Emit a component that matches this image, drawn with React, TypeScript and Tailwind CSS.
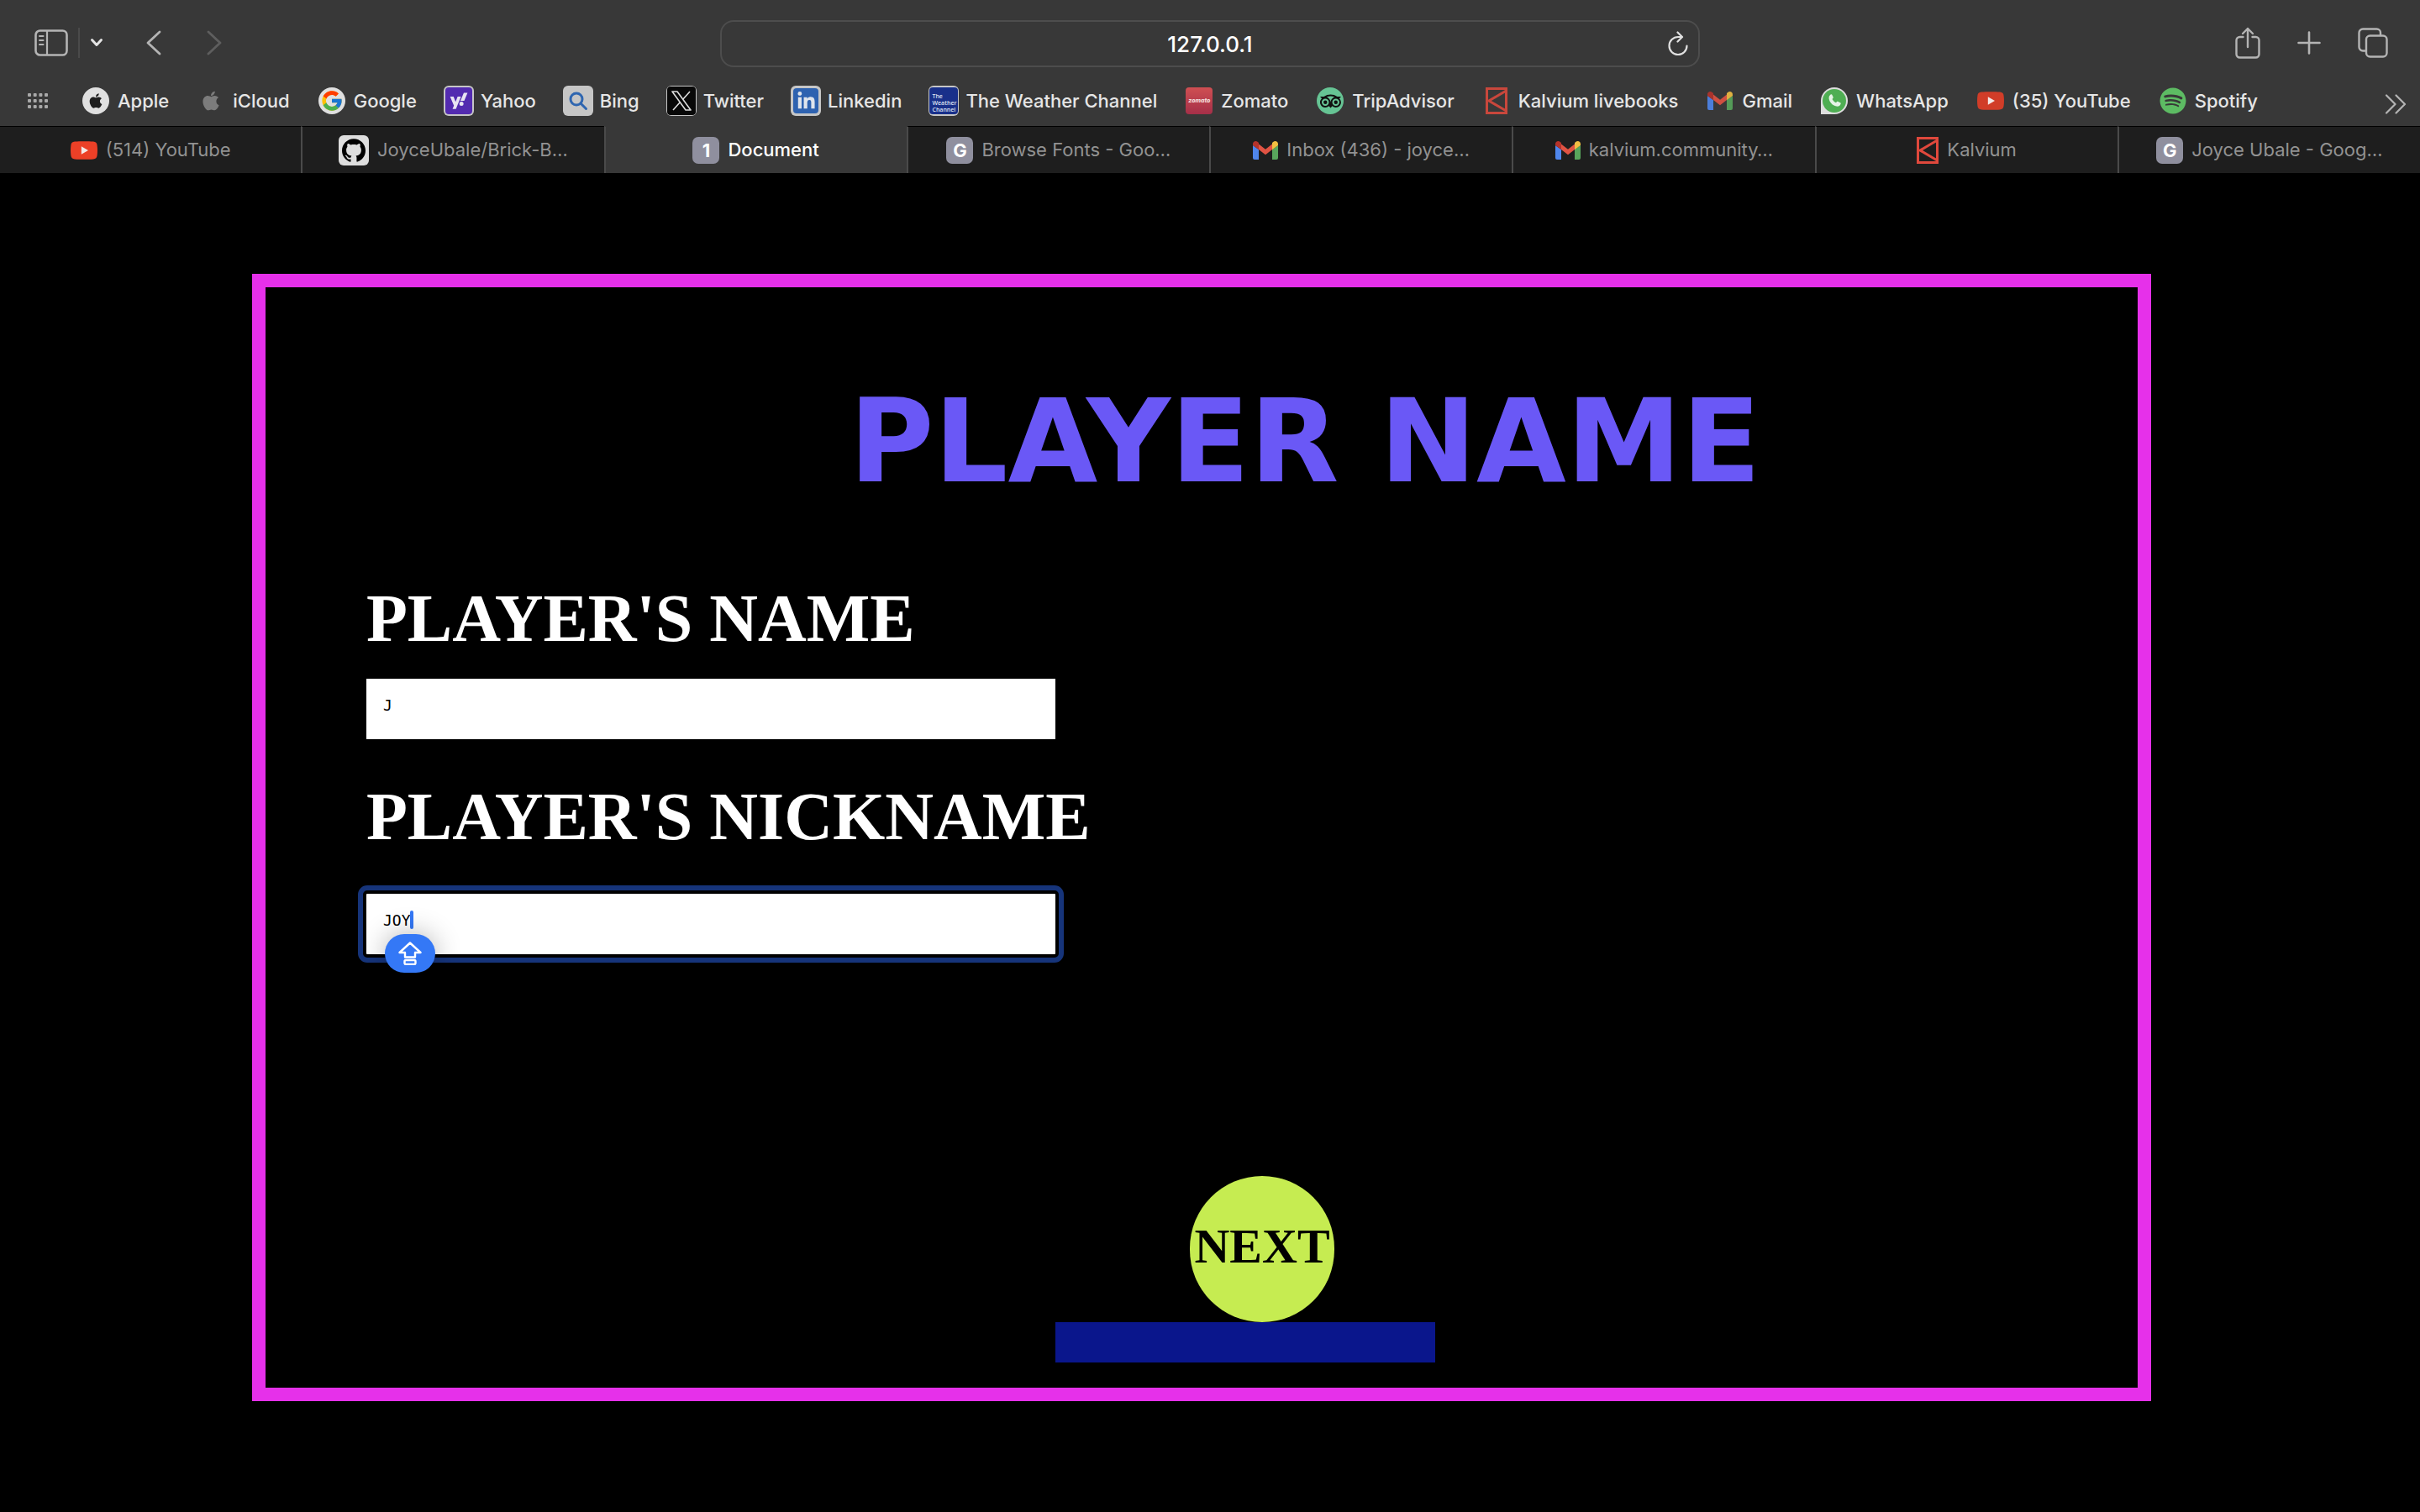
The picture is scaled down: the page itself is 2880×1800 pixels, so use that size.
import type { ReactNode } from "react";
import { FaApple, FaLinkedinIn, FaSpotify, FaYahoo } from "react-icons/fa6";
import { FcGoogle } from "react-icons/fc";
import { SiGithub, SiTripadvisor } from "react-icons/si";

/* ---------- toolbar glyphs ---------- */

function SidebarIcon() {
  return (
    <svg viewBox="0 0 40 32" className="h-8 w-10" fill="none" stroke="currentColor" aria-hidden="true">
      <rect x="1.5" y="1.5" width="37" height="29" rx="5" strokeWidth="2.6" />
      <path d="M15 1.500V30.500" strokeWidth="2.200" />
      <path d="M6 8h4.500M6 13h4.500M6 18h4.500" strokeWidth="2" strokeLinecap="round" />
    </svg>
  );
}

function ChevronDownIcon() {
  return (
    <svg viewBox="0 0 16 12" className="h-3 w-4" fill="none" stroke="currentColor" strokeWidth="3" strokeLinecap="round" strokeLinejoin="round" aria-hidden="true">
      <path d="M2.500 2.500 8 8.500l5.500-6" />
    </svg>
  );
}

function BackIcon() {
  return (
    <svg viewBox="0 0 20 30" className="h-[30px] w-5" fill="none" stroke="currentColor" strokeWidth="2.800" strokeLinecap="round" strokeLinejoin="round" aria-hidden="true">
      <path d="M17 2 3 15l14 13" />
    </svg>
  );
}

function ForwardIcon() {
  return (
    <svg viewBox="0 0 20 30" className="h-[30px] w-5" fill="none" stroke="currentColor" strokeWidth="2.800" strokeLinecap="round" strokeLinejoin="round" aria-hidden="true">
      <path d="m3 2 14 13L3 28" />
    </svg>
  );
}

function ReloadIcon() {
  return (
    <svg viewBox="0 0 24 30" className="h-[30px] w-6" fill="none" stroke="currentColor" strokeWidth="2.200" strokeLinecap="round" strokeLinejoin="round" aria-hidden="true">
      <path d="M22.500 17.500A10.500 10.500 0 1 1 12 7h4" />
      <path d="M11.500 1.500 17 7l-5.500 5.500" />
    </svg>
  );
}

function ShareIcon() {
  return (
    <svg viewBox="0 0 30 38" className="h-[38px] w-[30px]" fill="none" stroke="currentColor" strokeWidth="2.400" strokeLinecap="round" strokeLinejoin="round" aria-hidden="true">
      <path d="M9.500 12H5.500A4 4 0 0 0 1.500 16v16.500a4 4 0 0 0 4 4h19a4 4 0 0 0 4-4V16a4 4 0 0 0-4-4h-4" />
      <path d="M15 24V2M9 8l6-6 6 6" />
    </svg>
  );
}

function PlusIcon() {
  return (
    <svg viewBox="0 0 28 28" className="size-7" fill="none" stroke="currentColor" strokeWidth="2.600" strokeLinecap="round" aria-hidden="true">
      <path d="M14 1.500v25M1.500 14h25" />
    </svg>
  );
}

function TabsIcon() {
  return (
    <svg viewBox="0 0 36 36" className="size-9" fill="none" stroke="currentColor" strokeWidth="2.400" strokeLinejoin="round" aria-hidden="true">
      <rect x="10" y="9.500" width="24.500" height="25" rx="4.500" />
      <path d="M10 27.500H6A4.500 4.500 0 0 1 1.500 23V6A4.500 4.500 0 0 1 6 1.500h16.500A4.500 4.500 0 0 1 27 6v3.500" />
    </svg>
  );
}

function MoreIcon() {
  return (
    <svg viewBox="0 0 26 24" className="h-6 w-[26px]" fill="none" stroke="currentColor" strokeWidth="2.200" strokeLinecap="round" strokeLinejoin="round" aria-hidden="true">
      <path d="m2 1.500 10.500 10.500L2 22.500M13.500 1.500 24 12 13.500 22.500" />
    </svg>
  );
}

function GridDotsIcon() {
  return (
    <svg viewBox="0 0 24 18" className="h-[18px] w-6" fill="currentColor" aria-hidden="true">
      {[0, 7, 14].map((y) => [0, 6.7, 13.4, 20].map((x) => <rect key={`${x}-${y}`} x={x} y={y} width="4" height="4" rx="1" />))}
    </svg>
  );
}

/* ---------- site icons ---------- */

function GmailIcon({ className }: { className: string }) {
  return (
    <svg viewBox="0 0 30 22" className={className} aria-hidden="true">
      <path d="M0 5v15a2 2 0 0 0 2 2h5V10z" fill="#4f86ec" />
      <path d="M30 5v15a2 2 0 0 1-2 2h-5V10z" fill="#58a55c" />
      <path d="M7 3.500 15 9.800l8-6.300V10l-8 6.200L7 10z" fill="#e05343" />
      <path d="M0 3.500C0 .3 3.400-1 5.800.9L7 2v8.200L0 5z" fill="#b5332b" />
      <path d="M30 3.500C30 .3 26.600-1 24.200.9L23 2v8.200l7-5.200z" fill="#f2bf42" />
    </svg>
  );
}

function XIcon() {
  return (
    <svg viewBox="0 0 26 26" className="size-[26px]" fill="none" stroke="currentColor" strokeWidth="1.600" strokeLinejoin="round" aria-hidden="true">
      <path d="M2 2h6l16 22h-6z" />
      <path d="M23 2 14.500 11.500M11.500 14.500 3 24" />
    </svg>
  );
}

function YouTubeIcon({ className }: { className: string }) {
  return (
    <svg viewBox="0 0 32 22" className={className} aria-hidden="true">
      <path d="M5 .6C11 0 21 0 27 .6c3 .3 4.300 1.500 4.600 4.400.5 4 .5 8 0 12-.3 2.900-1.600 4.100-4.600 4.400-6 .6-16 .6-22 0-3-.3-4.300-1.500-4.600-4.400-.5-4-.5-8 0-12C.7 2.100 2 .9 5 .6z" fill="currentColor" />
      <path d="m12.800 6.300 8.200 4.700-8.200 4.700z" fill="#f4e9e7" />
    </svg>
  );
}

function KalviumIcon({ className }: { className: string }) {
  return (
    <svg viewBox="0 0 26 32" className={className} fill="none" stroke="currentColor" aria-hidden="true">
      <rect x="1.500" y="1.500" width="23" height="29" strokeWidth="3" />
      <path d="M24.500 4 4 16l20.500 12" strokeWidth="3" />
    </svg>
  );
}

function WhatsAppIcon() {
  return (
    <span className="flex size-8 items-center justify-center rounded-full rounded-bl-sm bg-[#dedede]">
      <span className="flex size-7 items-center justify-center rounded-full bg-[#4fae53] text-[#e6f3e6]">
        <svg viewBox="0 0 20 20" className="size-5" fill="currentColor" aria-hidden="true">
          <path d="M5.600 2.600c.6-.5 1.400-.4 1.700.2l1.300 2.700c.3.600.1 1-.3 1.500l-.8 1c1 2 2.400 3.300 4.500 4.300l1.100-1.200c.4-.4.8-.5 1.400-.2l2.600 1.300c.6.300.8.800.5 1.500-.8 2.300-2.900 3.400-5.200 2.800C7.700 15.300 4.500 12 3.600 7.400 3.300 5.500 4.200 3.600 5.600 2.600z" />
        </svg>
      </span>
    </span>
  );
}

function LetterBadge({ children }: { children: string }) {
  return (
    <span className="flex size-8 items-center justify-center rounded-[7px] bg-[#8f8f9e] text-[22px] leading-8 font-bold text-white">
      {children}
    </span>
  );
}

const tile = "flex size-9 items-center justify-center overflow-hidden rounded-md bg-[#c6c6c6]";

type Site = { label: string; icon: ReactNode };

const bookmarks: Site[] = [
  {
    label: "Apple",
    icon: (
      <span className="flex size-8 items-center justify-center rounded-full bg-[#e0e0e0] text-[#1e1e1e]">
        <FaApple className="size-5" />
      </span>
    ),
  },
  { label: "iCloud", icon: <FaApple className="size-[26px] text-[#7c7c7c]" /> },
  {
    label: "Google",
    icon: (
      <span className="flex size-8 items-center justify-center rounded-full bg-[#e0e0e0]">
        <FcGoogle className="size-[28px]" />
      </span>
    ),
  },
  {
    label: "Yahoo",
    icon: (
      <span className={tile}>
        <span className="flex size-8 items-center justify-center rounded-sm bg-[#532bb0] text-[#e8e4f2]">
          <FaYahoo className="size-[22px]" />
        </span>
      </span>
    ),
  },
  {
    label: "Bing",
    icon: (
      <span className={tile}>
        <svg viewBox="0 0 24 24" className="size-6" fill="none" stroke="#2f66b0" strokeWidth="3" strokeLinecap="round" aria-hidden="true">
          <circle cx="10" cy="10" r="7" />
          <path d="m15.500 15.500 6 6" />
        </svg>
      </span>
    ),
  },
  {
    label: "Twitter",
    icon: (
      <span className={tile}>
        <span className="flex size-[34px] items-center justify-center rounded-sm bg-[#080808] text-[#dcdcdc]">
          <XIcon />
        </span>
      </span>
    ),
  },
  {
    label: "Linkedin",
    icon: (
      <span className={tile}>
        <span className="flex size-[30px] items-center justify-center rounded-sm bg-[#2e62b0] text-[#dfe4ec]">
          <FaLinkedinIn className="size-[23px]" />
        </span>
      </span>
    ),
  },
  {
    label: "The Weather Channel",
    icon: (
      <span className={tile}>
        <span className="flex h-8 w-[34px] flex-col justify-end rounded-sm bg-[#19308a] pb-px pl-[3px] text-left font-['Open_Sans',sans-serif] text-[7px] leading-[8px] font-semibold text-[#dfe3f2]">
          <span>The</span>
          <span>Weather</span>
          <span>Channel</span>
        </span>
      </span>
    ),
  },
  {
    label: "Zomato",
    icon: (
      <span className="flex size-8 items-center justify-center overflow-hidden rounded-sm bg-linear-to-b from-[#cf4f52] to-[#a52f48] text-[7px] font-extrabold text-[#f2dada] italic">
        zomato
      </span>
    ),
  },
  {
    label: "TripAdvisor",
    icon: (
      <span className="flex size-8 items-center justify-center rounded-full bg-[#66c494] text-[#101010]">
        <SiTripadvisor className="size-[25px]" />
      </span>
    ),
  },
  { label: "Kalvium livebooks", icon: <KalviumIcon className="h-8 w-[26px] text-[#c9473c]" /> },
  { label: "Gmail", icon: <GmailIcon className="h-[22px] w-[30px] opacity-90" /> },
  { label: "WhatsApp", icon: <WhatsAppIcon /> },
  { label: "(35) YouTube", icon: <YouTubeIcon className="h-[22px] w-8 text-[#d13d28]" /> },
  { label: "Spotify", icon: <FaSpotify className="size-8 text-[#5dbb63]" /> },
];

const tabs: Site[] = [
  { label: "(514) YouTube", icon: <YouTubeIcon className="h-[22px] w-8 text-[#ec4027]" /> },
  {
    label: "JoyceUbale/Brick-B…",
    icon: (
      <span className="flex size-9 items-center justify-center rounded-md bg-[#dedede] text-black">
        <SiGithub className="size-7" />
      </span>
    ),
  },
  { label: "Document", icon: <LetterBadge>1</LetterBadge> },
  { label: "Browse Fonts - Goo…", icon: <LetterBadge>G</LetterBadge> },
  { label: "Inbox (436) - joyce…", icon: <GmailIcon className="h-[22px] w-[30px]" /> },
  { label: "kalvium.community…", icon: <GmailIcon className="h-[22px] w-[30px]" /> },
  { label: "Kalvium", icon: <KalviumIcon className="h-8 w-[26px] text-[#e0483c]" /> },
  { label: "Joyce Ubale - Goog…", icon: <LetterBadge>G</LetterBadge> },
];

/* ---------- browser chrome ---------- */

function Toolbar() {
  return (
    <div className="grid h-[92px] grid-cols-[1fr_minmax(0,1166px)_1fr] items-center pt-3 text-[#b4b4b4]">
      <div className="flex items-center pb-0.5 pl-[41px]">
        <button type="button" aria-label="Show sidebar">
          <SidebarIcon />
        </button>
        <span className="ml-3 h-9 w-[2px] bg-[#4a4a4a]" />
        <button type="button" aria-label="Tab groups" className="ml-3 text-[#e4e4e4]">
          <ChevronDownIcon />
        </button>
        <button type="button" aria-label="Back" className="ml-[50px]">
          <BackIcon />
        </button>
        <button type="button" aria-label="Forward" className="ml-[52px] text-[#5e5e5e]">
          <ForwardIcon />
        </button>
      </div>
      <div className="flex h-14 items-center rounded-2xl border-2 border-[#4d4d4d] pr-3 pl-9">
        <input
          type="text"
          aria-label="Address"
          defaultValue="127.0.0.1"
          className="min-w-0 flex-1 bg-transparent text-center text-[26px] font-medium text-white outline-none"
        />
        <button type="button" aria-label="Reload" className="text-[#e0e0e0]">
          <ReloadIcon />
        </button>
      </div>
      <div className="flex items-center justify-end gap-11 pr-[38px] pb-0.5">
        <button type="button" aria-label="Share">
          <ShareIcon />
        </button>
        <button type="button" aria-label="New tab">
          <PlusIcon />
        </button>
        <button type="button" aria-label="Show all tabs">
          <TabsIcon />
        </button>
      </div>
    </div>
  );
}

function BookmarksBar() {
  return (
    <nav aria-label="Favorites" className="flex h-[58px] items-center pr-4 pb-0.5 pl-[33px]">
      <button type="button" aria-label="Favorites overview" className="mr-[39px] text-[#a8a8a8]">
        <GridDotsIcon />
      </button>
      <div className="flex flex-1 items-center justify-between">
        {bookmarks.map((b) => (
          <a key={b.label} href="#" className="flex items-center gap-2 text-[22px] font-medium whitespace-nowrap text-[#e6e6e6]">
            <span className="flex w-9 justify-center">{b.icon}</span>
            {b.label}
          </a>
        ))}
      </div>
      <button type="button" aria-label="More favorites" className="mt-2 ml-[151px] text-[#b4b4b4]">
        <MoreIcon />
      </button>
    </nav>
  );
}

function TabStrip() {
  return (
    <div role="tablist" className="flex h-14">
      {tabs.map((t, i) => {
        const active = t.label === "Document";
        const tone = active
          ? "bg-[#383838] text-white font-medium border-t-[#383838]"
          : "bg-[#1e1e1e] text-[#929292] border-t-black";
        const edge = i === 0 ? "" : "border-l-2 border-l-[#4a4a4a]";
        return (
          <button
            key={t.label}
            type="button"
            role="tab"
            aria-selected={active}
            className={`flex min-w-0 flex-1 items-center justify-center gap-[10px] border-t text-[22px] whitespace-nowrap ${tone} ${edge}`}
          >
            {t.icon}
            {t.label}
          </button>
        );
      })}
    </div>
  );
}

/* ---------- page ---------- */

function CapsLockBadge() {
  return (
    <span className="absolute top-12 left-[22px] flex h-[46px] w-[60px] items-center justify-center rounded-full bg-[#3478f6] shadow-[0_0_32px_rgba(0,0,0,0.3)]">
      <svg viewBox="0 0 28 28" className="size-7" fill="none" stroke="white" strokeWidth="2.400" strokeLinejoin="round" aria-hidden="true">
        <path d="M14 1.500 26.500 13H20v5.500H8V13H1.500z" />
        <rect x="7.500" y="22" width="13" height="5" rx="1.500" />
      </svg>
    </span>
  );
}

const field = "block h-[72px] w-full bg-white px-5 pb-[10px] font-['DejaVu_Sans_Mono',monospace] text-[18px] text-black";
const label = "block font-['Liberation_Serif',serif] text-[80px] leading-[92px] font-bold text-white";

export default function App() {
  return (
    <div className="min-h-screen bg-black font-['Inter',sans-serif]">
      <header className="bg-[#383838]">
        <Toolbar />
        <BookmarksBar />
        <TabStrip />
      </header>

      <main className="mt-[120px] mr-[320px] ml-[300px] border-[16px] border-[#e630ea] pt-[104px] pb-[30px]">
        <h1 className="pl-[246px] text-center font-['DejaVu_Sans',sans-serif] text-[138px] leading-[160px] font-bold text-[#6a58f6]">
          PLAYER NAME
        </h1>

        <form onSubmit={(e) => e.preventDefault()}>
          <div className="ml-[120px] max-w-[820px]">
            <label htmlFor="player-name" className={`${label} mt-[84px] whitespace-nowrap`}>
              PLAYER'S NAME
            </label>
            <input id="player-name" type="text" defaultValue="J" className={`${field} mt-[26px]`} />

            <label htmlFor="player-nickname" className={`${label} mt-[46px] whitespace-nowrap`}>
              PLAYER'S NICKNAME
            </label>
            <div className="relative mt-[46px]">
              <input
                id="player-nickname"
                type="text"
                defaultValue="JOY"
                className={`${field} rounded-[1px] outline-[6px] outline-offset-4 outline-[#16347a]`}
              />
              <span className="absolute top-5 left-[52px] h-[22px] w-1 rounded-full bg-[#3478f6]" />
              <CapsLockBadge />
            </div>
          </div>

          <div className="mt-[264px] flex flex-col items-center pl-[104px]">
            <button
              type="submit"
              className="ml-10 h-[174px] w-[172px] rounded-full bg-[#c6ec51] pb-2 font-['Liberation_Serif',serif] text-[58px] font-bold text-black"
            >
              NEXT
            </button>
            <div className="h-12 w-full max-w-[452px] bg-[#0a168c]" />
          </div>
        </form>
      </main>
    </div>
  );
}
